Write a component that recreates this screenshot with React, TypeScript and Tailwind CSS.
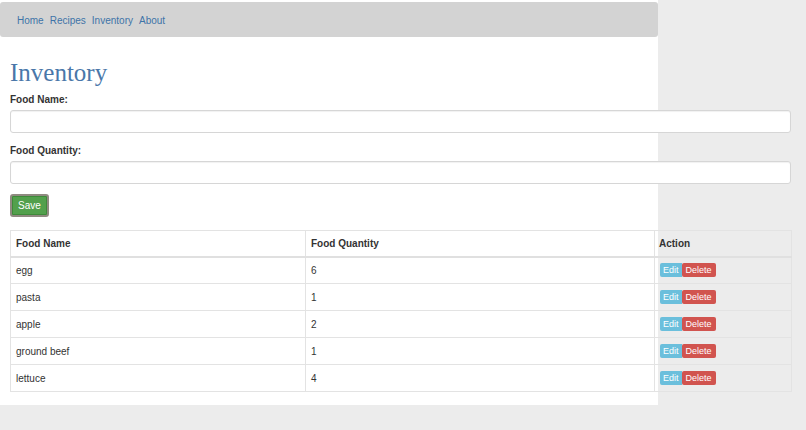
import React from "react";

const rows = [
  { name: "egg", qty: 6 },
  { name: "pasta", qty: 1 },
  { name: "apple", qty: 2 },
  { name: "ground beef", qty: 1 },
  { name: "lettuce", qty: 4 },
];

const inputClasses =
  "block w-[781px] h-[23px] bg-white border border-[#d6d6d6] rounded-[3px] shadow-[inset_0_1px_1px_rgba(0,0,0,0.06)]";

export default function App() {
  return (
    <div
      className="min-h-[430px] bg-[#ececec] text-[#333]"
      style={{ fontFamily: '"Liberation Sans", Arial, sans-serif' }}
    >
      <div className="w-[658px] h-[405px] bg-white pt-[2px]">
        <nav className="h-[35px] bg-[#d3d3d3] rounded-[3px] flex items-center gap-[6px] pl-[17px] pt-[2px] text-[10px] text-[#3e74a8]">
          <a href="#">Home</a>
          <a href="#">Recipes</a>
          <a href="#">Inventory</a>
          <a href="#">About</a>
        </nav>

        <div className="px-[10px]">
          <h1
            className="mt-[21px] text-[25px] leading-[30px] text-[#4a77a9]"
            style={{ fontFamily: '"Liberation Serif", "Times New Roman", serif' }}
          >
            Inventory
          </h1>

          <label className="block mt-[5px] text-[10px] font-bold leading-[14px]">
            Food Name:
          </label>
          <input type="text" className={`${inputClasses} mt-[3px]`} />

          <label className="block mt-[11px] text-[10px] font-bold leading-[14px]">
            Food Quantity:
          </label>
          <input type="text" className={`${inputClasses} mt-[3px]`} />

          <button className="mt-[10px] w-[39px] h-[23px] rounded-[3px] border-2 border-[#8f8a80] bg-[#52a04c] text-white text-[10px] shadow-[inset_0_0_0_1px_#3e8a3a]">
            Save
          </button>

          <table className="mt-[13px] w-[781px] border-collapse text-[10px] table-fixed">
            <colgroup>
              <col className="w-[295px]" />
              <col className="w-[349px]" />
              <col className="w-[137px]" />
            </colgroup>
            <thead>
              <tr className="h-[26px] border-b-2 border-[#e0e0e0]">
                <th className="text-left font-bold px-[5px] border border-[#e3e3e3]">Food Name</th>
                <th className="text-left font-bold px-[5px] border border-[#e3e3e3]">Food Quantity</th>
                <th className="text-left font-bold px-[4px] border border-[#e3e3e3]">Action</th>
              </tr>
            </thead>
            <tbody>
              {rows.map((r) => (
                <tr key={r.name} className="h-[27px]">
                  <td className="px-[5px] border border-[#e3e3e3]">{r.name}</td>
                  <td className="px-[5px] border border-[#e3e3e3]">{r.qty}</td>
                  <td className="px-[5px] border border-[#e3e3e3]">
                    <div className="flex">
                      <button className="h-[14px] px-[3px] bg-[#6bbfdc] text-white text-[9px] leading-[14px] rounded-l-[2px]">
                        Edit
                      </button>
                      <button className="h-[14px] px-[4px] bg-[#d1544f] text-white text-[9px] leading-[14px] rounded-[2px]">
                        Delete
                      </button>
                    </div>
                  </td>
                </tr>
              ))}
            </tbody>
          </table>
        </div>
      </div>
    </div>
  );
}
